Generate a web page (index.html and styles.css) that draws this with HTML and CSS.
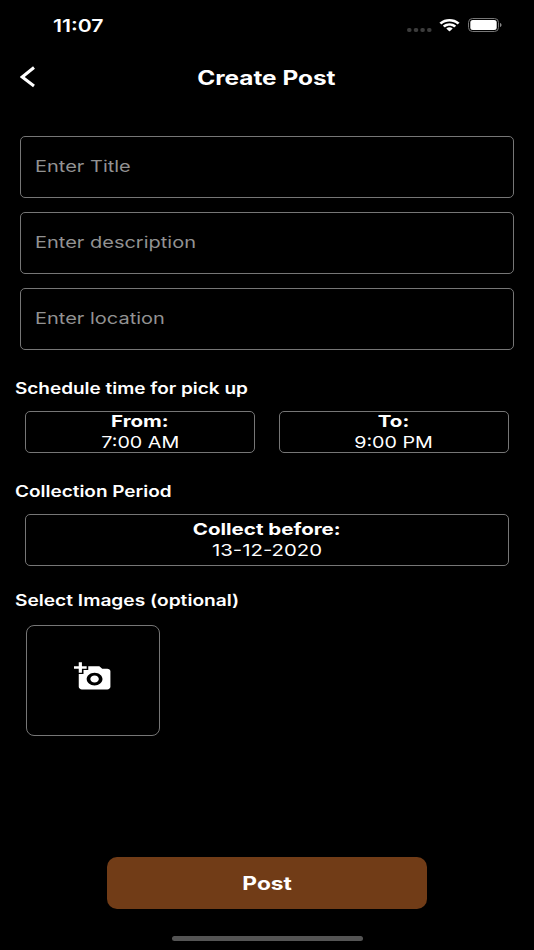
FILE: index.html
```html
<!DOCTYPE html>
<html lang="en">
<head>
<meta charset="utf-8">
<title>Create Post</title>
<link rel="stylesheet" href="styles.css">
</head>
<body>
<div class="screen">
  <div class="status">
    <span class="clock"><span class="wide">11:07</span></span>
    <div class="indicators">
      <svg class="cell" width="25" height="4" viewBox="0 0 25 4"><g fill="#3c3c3c"><rect x="0" y="0" width="4.6" height="4" rx="1.9"/><rect x="6.7" y="0" width="4.6" height="4" rx="1.9"/><rect x="13.3" y="0" width="4.6" height="4" rx="1.9"/><rect x="20" y="0" width="4.6" height="4" rx="1.9"/></g></svg>
      <svg class="wifi" width="21" height="13" viewBox="0 0 17 12" preserveAspectRatio="none" fill="#fff"><path d="M8.5 2.4c2.4 0 4.6.9 6.3 2.5.1.1.3.1.4 0l1.2-1.2c.2-.2.2-.4 0-.5C12-1 5-1 .6 3.2c-.2.1-.2.3 0 .5l1.2 1.2c.1.1.3.1.4 0C3.9 3.3 6.1 2.4 8.5 2.4z"/><path d="M8.5 6.3c1.3 0 2.6.5 3.5 1.4.1.1.3.1.5 0l1.2-1.2c.1-.2.1-.4 0-.5-2.9-2.7-7.5-2.7-10.4 0-.1.1-.1.3 0 .5l1.2 1.2c.2.1.4.1.5 0 1-.9 2.2-1.4 3.5-1.4z"/><path d="M10.9 8.9c.1-.1.1-.3 0-.4-1.4-1.2-3.4-1.2-4.8 0-.1.1-.1.3 0 .4l2.2 2.3c.1.1.3.1.4 0z"/></svg>
      <svg class="battery" width="34" height="14" viewBox="0 0 34 14"><rect x=".5" y=".5" width="30" height="13" rx="4" fill="none" stroke="#777"/><rect x="2.3" y="2" width="26.4" height="10" rx="2.5" fill="#fff"/><path d="M32 5c2 .6 2 3.4 0 4z" fill="#888"/></svg>
    </div>
  </div>
  <header class="header">
    <svg class="back" width="16" height="22" viewBox="0 0 16 22"><path d="M14 1.5 2.2 11 14 20" fill="none" stroke="#fff" stroke-width="3"/></svg>
    <h1 class="title"><span class="wide">Create Post</span></h1>
  </header>
  <main class="form">
    <div class="fields">
      <div class="field"><span class="wide">Enter Title</span></div>
      <div class="field"><span class="wide">Enter description</span></div>
      <div class="field"><span class="wide">Enter location</span></div>
    </div>
    <h2 class="label schedule"><span class="wide">Schedule time for pick up</span></h2>
    <div class="times">
      <div class="box time"><b class="wide">From:</b><span class="wide">7:00 AM</span></div>
      <div class="box time"><b class="wide">To:</b><span class="wide">9:00 PM</span></div>
    </div>
    <h2 class="label period"><span class="wide">Collection Period</span></h2>
    <div class="box date"><b class="wide">Collect before:</b><span class="wide">13-12-2020</span></div>
    <h2 class="label images"><span class="wide">Select Images (optional)</span></h2>
    <div class="picker">
      <svg width="38" height="31" viewBox="0 0 24 24" preserveAspectRatio="none" fill="#fff"><path d="M3 4V1h2v3h3v2H5v3H3V6H0V4h3zm3 6V7h3V4h7l1.83 2H21c1.1 0 2 .9 2 2v12c0 1.1-.9 2-2 2H5c-1.1 0-2-.9-2-2V10h3zm7 9c2.76 0 5-2.24 5-5s-2.24-5-5-5-5 2.24-5 5 2.24 5 5 5zm-2.7-5c0 1.49 1.21 2.7 2.7 2.7s2.7-1.21 2.7-2.7-1.21-2.7-2.7-2.7-2.7 1.21-2.7 2.7z"/></svg>
    </div>
  </main>
  <div class="post"><span class="wide">Post</span></div>
  <div class="home"></div>
</div>
</body>
</html>
```
FILE: styles.css
```css
* { box-sizing: border-box; }
body { margin: 0; background: #000; }
.screen {
  width: 534px;
  height: 950px;
  overflow: hidden;
  display: flex;
  flex-direction: column;
  background: #000;
  color: #fff;
  font-family: Inter, "Liberation Sans", sans-serif;
  font-size: 16px;
}
h1, h2 { margin: 0; }
.wide {
  display: inline-block;
  white-space: nowrap;
  transform: scaleX(1.21);
  transform-origin: center;
}
.status {
  height: 50px;
  padding: 0 32px 0 53px;
  display: flex;
  justify-content: space-between;
  align-items: center;
}
.clock { font-size: 17.5px; font-weight: 600; }
.clock .wide, .field .wide, .label .wide { transform-origin: left; }
.indicators { display: flex; align-items: center; }
.cell { margin: 9px 7px 0 0; }
.wifi { margin-right: 8px; }
.header {
  height: 54px;
  padding: 0 20px;
  display: grid;
  grid-template-columns: 16px 1fr 16px;
  align-items: center;
}
.title { padding: 1px 2px 0 0; font-size: 19.5px; font-weight: 700; text-align: center; }
.title .wide { transform: scaleX(1.25); }
.form { padding: 32px 0 0; }
.fields { display: grid; gap: 14px; padding: 0 20px; }
.field {
  height: 62px;
  padding: 0 0 3px 14px;
  display: flex;
  align-items: center;
  border: 1px solid #767676;
  border-radius: 5px;
  color: #929292;
  font-size: 16.3px;
}
.field .wide { transform: scaleX(1.228); }
.label { height: 20px; margin-left: 15px; font-size: 15.8px; line-height: 20px; font-weight: 600; }
.label .wide { transform: scaleX(1.2); }
.schedule { margin-top: 29px; }
.times { display: flex; gap: 24px; margin: 12px 25px 0; }
.box {
  display: flex;
  flex-direction: column;
  align-items: center;
  justify-content: center;
  border: 1px solid #767676;
  border-radius: 5px;
  font-size: 16.3px;
  line-height: 21.5px;
}
.box b.wide { transform: scaleX(1.26); }
.time { flex: 1; height: 42px; }
.period { margin-top: 29px; }
.date { height: 52px; margin: 12px 25px 0; }
.date span.wide { transform: scaleX(1.25); }
.images { margin-top: 25px; }
.images .wide { transform: scaleX(1.212); }
.picker {
  width: 134px;
  height: 111px;
  margin: 14px 0 0 26px;
  padding-bottom: 9px;
  display: flex;
  align-items: center;
  justify-content: center;
  border: 1px solid #767676;
  border-radius: 8px;
}
.post {
  width: 320px;
  height: 52px;
  margin: 121px auto 0 107px;
  display: flex;
  align-items: center;
  justify-content: center;
  border-radius: 10px;
  background: #713c17;
  font-size: 18.5px;
  font-weight: 700;
}
.post .wide { transform: scaleX(1.23); }
.home { width: 191px; height: 5px; margin: 27px 0 0 172px; border-radius: 3px; background: #545454; }
```
